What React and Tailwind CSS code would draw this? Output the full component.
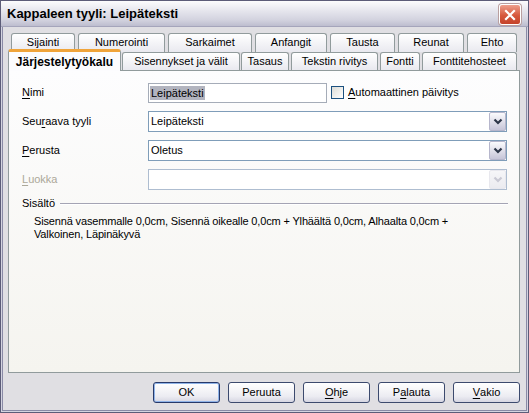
import React from "react";

const font = { fontFamily: '"Liberation Sans", Arial, sans-serif' };

function U({ children }) {
  return <span className="underline underline-offset-[2px]">{children}</span>;
}

function Chevron({ disabled }) {
  return (
    <svg width="10" height="7" viewBox="0 0 10 7">
      <path
        d="M1.5 1.5 L5 5 L8.5 1.5"
        fill="none"
        stroke={disabled ? "#c9c9d4" : "#2d3648"}
        strokeWidth="2.2"
      />
    </svg>
  );
}

function Combo({ value, disabled }) {
  return (
    <div
      className={
        "w-[359px] h-[21px] flex items-center border bg-white " +
        (disabled ? "border-[#aebdd0]" : "border-[#7f9db9]")
      }
    >
      <div className="flex-1 pl-[2px] text-[11px] text-black leading-none">{value}</div>
      <div
        className={
          "w-[17px] h-[19px] flex items-center justify-center rounded-[2px] border " +
          (disabled
            ? "border-[#e8e8ee] bg-[linear-gradient(to_bottom,#f6f6f8,#ebebf0)]"
            : "border-[#b6b6cc] bg-[linear-gradient(to_bottom,#fbfbfd,#c6c5d8)]")
        }
      >
        <Chevron disabled={disabled} />
      </div>
    </div>
  );
}

function BackTab({ w, label }) {
  return (
    <div
      style={{ width: w }}
      className="h-[19px] shrink-0 flex justify-center pt-[3px] text-[11px] text-black leading-none border border-b-0 border-[#919b9c] rounded-t-[3px] bg-[linear-gradient(to_bottom,#ffffff,#e9e9ef)]"
    >
      {label}
    </div>
  );
}

function FrontTab({ w, ml, label }) {
  return (
    <div
      style={{ width: w, marginLeft: ml }}
      className="h-[18px] mt-[3px] shrink-0 flex justify-center pt-[3px] text-[11px] text-black leading-none border border-b-0 border-[#919b9c] rounded-t-[3px] bg-[linear-gradient(to_bottom,#ffffff,#e9e9ef)]"
    >
      {label}
    </div>
  );
}

function Btn({ children, def }) {
  return (
    <div
      className={
        "w-[67px] h-[21px] flex items-center justify-center rounded-[3px] border text-[11px] text-black bg-[linear-gradient(to_bottom,#ffffff,#ececf2_70%,#d6d6e2)] " +
        (def
          ? "border-[#27396a] shadow-[inset_0_0_0_1px_#8fb3e8]"
          : "border-[#3c4a6e]")
      }
    >
      {children}
    </div>
  );
}

export default function App() {
  return (
    <div
      style={font}
      className="w-[529px] h-[413px] flex flex-col border border-[#5c5c78] bg-[#e0dfe3] overflow-hidden"
    >
      {/* Title bar */}
      <div className="h-[26px] shrink-0 flex items-center justify-between pl-[6px] pr-[7px] bg-[linear-gradient(to_bottom,#fcfcfd,#e8e8ef_35%,#d3d3df_75%,#bdbdcf)] border-b border-[#a5a5bb]">
        <div className="text-[13px] font-bold text-black leading-none">Kappaleen tyyli: Leipäteksti</div>
        <div className="w-[22px] h-[21px] mt-[2px] rounded-[3px] border border-white bg-[linear-gradient(to_bottom,#eea08c,#d6583c_55%,#c4432a)] flex items-center justify-center shadow-[0_0_0_1px_#b9a0a0]">
          <svg width="12" height="12" viewBox="0 0 12 12">
            <path d="M2 2 L10 10 M10 2 L2 10" stroke="#fff" strokeWidth="2.2" strokeLinecap="square" />
          </svg>
        </div>
      </div>

      {/* Body */}
      <div className="flex-1 flex flex-col bg-[#d4d4e0] px-[1px] pb-[1px]">
        <div className="flex-1 flex flex-col border-x border-b border-[#8a8aa6] bg-[#e0dfe3] pl-[5px] pr-[6px] pt-[6px]">
          {/* Tabs */}
          <div className="flex flex-col">
            <div className="flex gap-[3px] pl-[3px]">
              <BackTab w={64} label="Sijainti" />
              <BackTab w={87} label="Numerointi" />
              <BackTab w={84} label="Sarkaimet" />
              <BackTab w={72} label="Anfangit" />
              <BackTab w={65} label="Tausta" />
              <BackTab w={66} label="Reunat" />
              <BackTab w={50} label="Ehto" />
            </div>
            <div className="flex h-[21px] -mt-[3px] relative z-10">
              <div className="w-[113px] h-[22px] shrink-0 flex justify-center pt-[4px] text-[12px] font-bold text-black leading-none border-x border-[#919b9c] border-t-[3px] border-t-[#f0a43a] rounded-t-[3px] bg-[#fcfcfe]">
                Järjestelytyökalu
              </div>
              <FrontTab w={118} ml={1} label="Sisennykset ja välit" />
              <FrontTab w={48} ml={1} label="Tasaus" />
              <FrontTab w={87} ml={2} label="Tekstin rivitys" />
              <FrontTab w={40} ml={2} label="Fontti" />
              <FrontTab w={95} ml={2} label="Fonttitehosteet" />
            </div>
          </div>

          {/* Panel */}
          <div className="h-[303px] border border-[#919b9c] bg-[linear-gradient(to_bottom,#fdfdfe,#f5f4ef)] flex flex-col pt-[11px] pl-[13px] text-[11px] text-black">
            <div className="flex flex-col gap-[8px]">
              <div className="flex items-center h-[21px]">
                <div className="w-[126px] leading-none"><U>N</U>imi</div>
                <div className="w-[179px] h-[20px] border border-[#a5acb8] bg-white flex items-center pl-[1px]">
                  <span className="bg-[#b2b4bf] px-[1px] leading-[14px]">Leipäteksti</span>
                </div>
                <div className="ml-[4px] w-[13px] h-[13px] border border-[#1c5180] bg-[linear-gradient(135deg,#dcdcd7,#ffffff)]" />
                <div className="ml-[4px] leading-none"><U>A</U>utomaattinen päivitys</div>
              </div>
              <div className="flex items-center h-[21px]">
                <div className="w-[126px] leading-none">Seu<U>r</U>aava tyyli</div>
                <Combo value="Leipäteksti" />
              </div>
              <div className="flex items-center h-[21px]">
                <div className="w-[126px] leading-none"><U>P</U>erusta</div>
                <Combo value="Oletus" />
              </div>
              <div className="flex items-center h-[21px]">
                <div className="w-[126px] leading-none text-[#aca899]"><U>L</U>uokka</div>
                <Combo value="" disabled />
              </div>
            </div>

            <div className="flex items-center mt-[7px] pr-[11px]">
              <div className="leading-[13px]">Sisältö</div>
              <div className="flex-1 ml-[5px] border-t border-[#a4a4b4] border-b border-b-white" />
            </div>
            <div className="pl-[12px] mt-[5px] leading-[13px] tracking-[-0.15px]">
              <div>Sisennä vasemmalle 0,0cm, Sisennä oikealle 0,0cm + Ylhäältä 0,0cm, Alhaalta 0,0cm +</div>
              <div>Valkoinen, Läpinäkyvä</div>
            </div>
          </div>

          {/* Buttons */}
          <div className="flex justify-end gap-[8px] mt-[9px]">
            <Btn def>OK</Btn>
            <Btn>Peruuta</Btn>
            <Btn><U>O</U>hje</Btn>
            <Btn>P<U>a</U>lauta</Btn>
            <Btn><U>V</U>akio</Btn>
          </div>
        </div>
      </div>
    </div>
  );
}
